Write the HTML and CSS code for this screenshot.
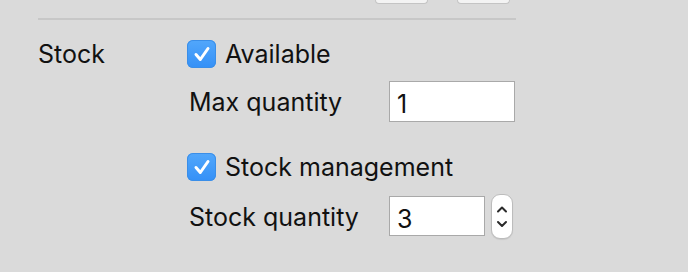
FILE: index.html
```html
<!DOCTYPE html>
<html>
<head>
<meta charset="utf-8">
<link rel="stylesheet" href="styles.css">
</head>
<body>
<div class="toolbar"><span class="tb-btn"></span><span class="tb-btn"></span></div>
<div class="sep"></div>
<section class="form">
  <div class="label">Stock</div>
  <div class="fields">
    <label class="check row1"><span class="box"><svg viewBox="0 0 28 28" width="28" height="28"><path d="M8 14.5 L12.3 19.5 L20 8.5" fill="none" stroke="#fff" stroke-width="3" stroke-linecap="round" stroke-linejoin="round"/></svg></span>Available</label>
    <div class="field row2"><span class="flabel">Max quantity</span><input class="inp" type="text" value="1"></div>
    <label class="check row3"><span class="box"><svg viewBox="0 0 28 28" width="28" height="28"><path d="M8 14.5 L12.3 19.5 L20 8.5" fill="none" stroke="#fff" stroke-width="3" stroke-linecap="round" stroke-linejoin="round"/></svg></span>Stock management</label>
    <div class="field row4"><span class="flabel">Stock quantity</span><input class="inp short" type="text" value="3"><span class="stepper"><svg viewBox="0 0 22 45" width="22" height="45"><path d="M7 17.5 L11 13.5 L15 17.5" fill="none" stroke="#2a2a2a" stroke-width="2" stroke-linecap="round" stroke-linejoin="round"/><path d="M7 28 L11 32 L15 28" fill="none" stroke="#2a2a2a" stroke-width="2" stroke-linecap="round" stroke-linejoin="round"/></svg></span></div>
  </div>
</section>
</body>
</html>
```
FILE: styles.css
```css
html, body {
  margin: 0;
  padding: 0;
  background: #dadada;
  width: 688px;
  height: 272px;
  overflow: hidden;
  font-family: "Inter", "Liberation Sans", sans-serif;
  font-size: 25px;
  color: #111;
}
.toolbar {
  display: flex;
  gap: 29px;
  padding-left: 375px;
  height: 4px;
}
.tb-btn {
  display: block;
  width: 53px;
  height: 4px;
  background: #f3f3f3;
  border: 1px solid #c4c4c4;
  border-top: none;
  border-radius: 0 0 6px 6px;
  box-sizing: border-box;
}
.sep {
  margin: 14px 0 0 38px;
  width: 478px;
  height: 2px;
  background: #c7c7c7;
}
.form {
  display: grid;
  grid-template-columns: 149px auto;
  padding: 20px 0 0 38px;
}
.label {
  line-height: 28px;
  height: 28px;
}
.fields {
  display: flex;
  flex-direction: column;
}
.check {
  display: flex;
  align-items: center;
  gap: 9px;
  line-height: 28px;
}
.row1 { height: 28px; }
.row2 { height: 41px; margin-top: 13px; }
.row3 { height: 29px; margin-top: 30px; }
.row4 { height: 45px; margin-top: 13px; }
.box {
  display: block;
  width: 29px;
  height: 28px;
  border-radius: 6px;
  background: linear-gradient(#52a7fb, #3490f7);
  box-shadow: inset 0 0 0 1px #3a8ee8;
}
.box svg { display: block; margin-left: 1px; }
.field {
  display: flex;
  align-items: center;
  padding-left: 2px;
}
.flabel {
  width: 200px;
  line-height: 28px;
}
.inp {
  box-sizing: border-box;
  width: 126px;
  height: 41px;
  border: 1px solid #a9a9a9;
  background: #fff;
  font: inherit;
  color: #111;
  padding: 5px 7px 0 7px;
  margin: 0;
  outline: none;
  border-radius: 0;
}
.inp.short {
  width: 96px;
  height: 40px;
  margin-top: -1px;
}
.stepper {
  display: block;
  margin-left: 6px;
  width: 22px;
  height: 45px;
  box-sizing: border-box;
  background: #fff;
  border: 1px solid #bcbcbc;
  border-radius: 9px;
  box-shadow: 0 1px 1px rgba(0,0,0,0.08);
}
.stepper svg { display: block; margin: -1px 0 0 -1px; }
```
